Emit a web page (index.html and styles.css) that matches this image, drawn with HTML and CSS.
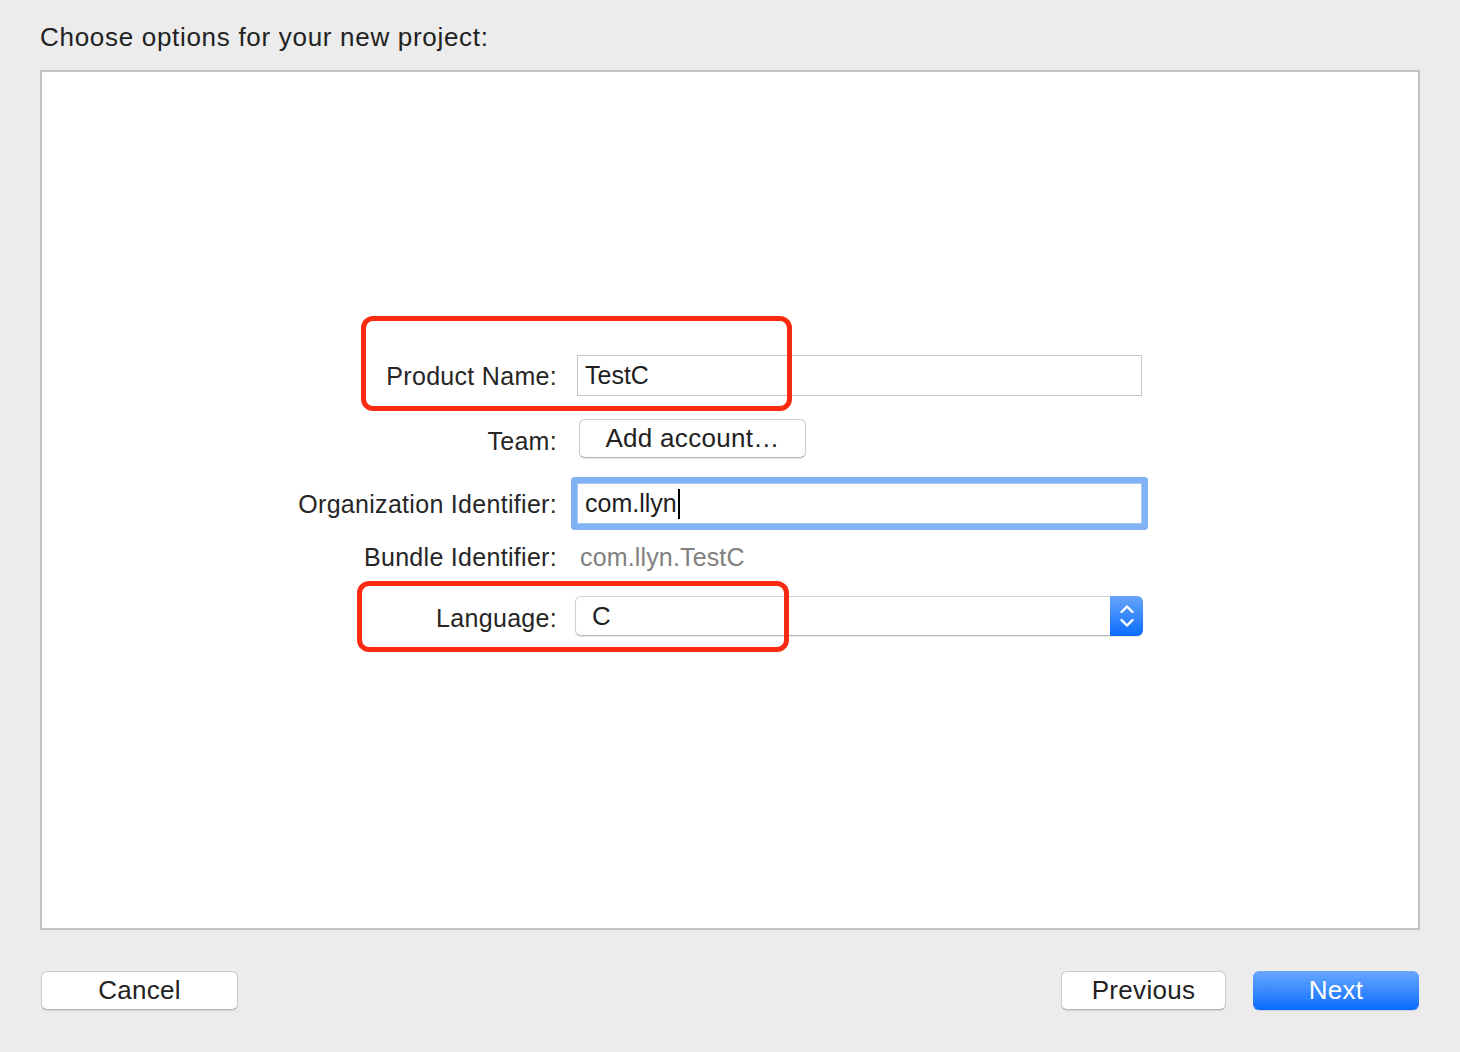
FILE: index.html
```html
<!DOCTYPE html>
<html lang="en">
<head>
<meta charset="utf-8">
<title>Choose options for your new project</title>
<link rel="stylesheet" href="styles.css">
</head>
<body>
<div class="window">
  <h1 class="title">Choose options for your new project:</h1>
  <div class="panel">
    <div class="form">
      <div class="row row-name">
        <div class="label">Product Name:</div>
        <div class="control"><div class="field">TestC</div></div>
      </div>
      <div class="row row-team">
        <div class="label label-low">Team:</div>
        <div class="control"><div class="btn btn-team">Add account…</div></div>
      </div>
      <div class="row row-org">
        <div class="label">Organization Identifier:</div>
        <div class="control"><div class="field field-focus">com.llyn<span class="caret"></span></div></div>
      </div>
      <div class="row row-bundle">
        <div class="label">Bundle Identifier:</div>
        <div class="control"><div class="static">com.llyn.TestC</div></div>
      </div>
      <div class="row row-lang">
        <div class="label label-low">Language:</div>
        <div class="control">
          <div class="popup">
            <span class="popup-value">C</span>
            <span class="stepper">
              <svg width="16" height="30" viewBox="0 0 16 30" fill="none" stroke="#fff" stroke-width="2.4" stroke-linecap="round" stroke-linejoin="round">
                <path d="M2.5 11 L8 5.5 L13.5 11"/>
                <path d="M2.5 19 L8 24.5 L13.5 19"/>
              </svg>
            </span>
          </div>
        </div>
      </div>
    </div>
  </div>
  <div class="footer">
    <div class="btn btn-cancel">Cancel</div>
    <div class="footer-right">
      <div class="btn btn-prev">Previous</div>
      <div class="btn btn-next">Next</div>
    </div>
  </div>
  <div class="annot annot-name"></div>
  <div class="annot annot-lang"></div>
</div>
</body>
</html>
```

FILE: styles.css
```css
* { box-sizing: border-box; }

html, body {
  margin: 0;
  padding: 0;
}

body {
  background: #ececec;
  font-family: "Liberation Sans", Arial, sans-serif;
  color: #262626;
  width: 1460px;
  height: 1052px;
  overflow: hidden;
}

.window {
  position: relative;
  width: 1460px;
  height: 1052px;
}

.title {
  margin: 0;
  padding: 22px 0 0 40px;
  height: 70px;
  font-size: 26px;
  line-height: 30px;
  font-weight: normal;
  letter-spacing: 0.7px;
  color: #222;
}

.panel {
  margin-left: 40px;
  width: 1380px;
  height: 860px;
  background: #fff;
  border: 2px solid #c3c3c3;
  padding-top: 283px;
}

.form {
  margin-left: 255px;
  display: flex;
  flex-direction: column;
}

.row {
  display: flex;
  align-items: center;
}

.row-name { height: 41px; }
.row-team { height: 39px; margin-top: 23px; }
.row-org { height: 41px; margin-top: 25px; }
.row-bundle { height: 34px; margin-top: 16px; }
.row-lang { height: 40px; margin-top: 22px; }

.label {
  width: 260px;
  text-align: right;
  font-size: 25px;
  line-height: 30px;
  letter-spacing: 0.3px;
  color: #262626;
}

.label-low { padding-top: 4px; }

.control {
  margin-left: 19px;
  width: 567px;
  height: 100%;
  display: flex;
  align-items: center;
}

.field {
  margin: 0 1px;
  width: 565px;
  height: 41px;
  border: 1px solid #c6c6c6;
  background: #fff;
  font-size: 25px;
  line-height: 39px;
  padding-left: 7px;
  color: #1e1e1e;
  display: flex;
  align-items: center;
}

.field-focus {
  border-color: #a9c6ee;
  box-shadow: 0 0 0 6px #80b2f5;
  border-radius: 1px;
}

.caret {
  display: inline-block;
  width: 2px;
  height: 30px;
  background: #000;
  margin-left: 1px;
}

.static {
  padding-left: 4px;
  font-size: 25px;
  line-height: 30px;
  letter-spacing: 0.15px;
  color: #808080;
}

.btn {
  display: flex;
  align-items: center;
  justify-content: center;
  height: 39px;
  background: #fff;
  border: 1px solid #cbcbcb;
  border-bottom-color: #b5b5b5;
  border-radius: 6px;
  box-shadow: 0 1px 1px rgba(0, 0, 0, 0.10);
  font-size: 26px;
  letter-spacing: 0.3px;
  color: #222;
}

.btn-team {
  margin-left: 3px;
  width: 227px;
}

.popup {
  position: relative;
  width: 568px;
  height: 40px;
  border: 1px solid #d2d2d2;
  border-bottom-color: #bcbcbc;
  border-radius: 6px;
  background: #fff;
  box-shadow: 0 1px 1px rgba(0, 0, 0, 0.10);
  display: flex;
  align-items: center;
  margin-left: -1px;
}

.popup-value {
  flex: 1;
  padding-left: 16px;
  font-size: 26px;
  color: #222;
}

.stepper {
  width: 33px;
  height: 40px;
  margin: -1px -1px -1px 0;
  border-radius: 0 6px 6px 0;
  background: linear-gradient(#67a5fb, #0b6cff);
  display: flex;
  align-items: center;
  justify-content: center;
}

.footer {
  margin-top: 41px;
  padding: 0 41px;
  display: flex;
  justify-content: space-between;
}

.footer-right {
  display: flex;
  gap: 27px;
}

.btn-cancel { width: 197px; }
.btn-prev { width: 165px; }

.btn-next {
  width: 166px;
  border: none;
  background: linear-gradient(#6aa8ff, #0a6cff);
  color: #fff;
  box-shadow: 0 1px 1px rgba(0, 0, 0, 0.12);
}

.annot {
  position: absolute;
  border: 5px solid #fb2a10;
  border-radius: 12px;
}

.annot-name {
  left: 361px;
  top: 316px;
  width: 431px;
  height: 95px;
}

.annot-lang {
  left: 357px;
  top: 581px;
  width: 432px;
  height: 71px;
}
```
